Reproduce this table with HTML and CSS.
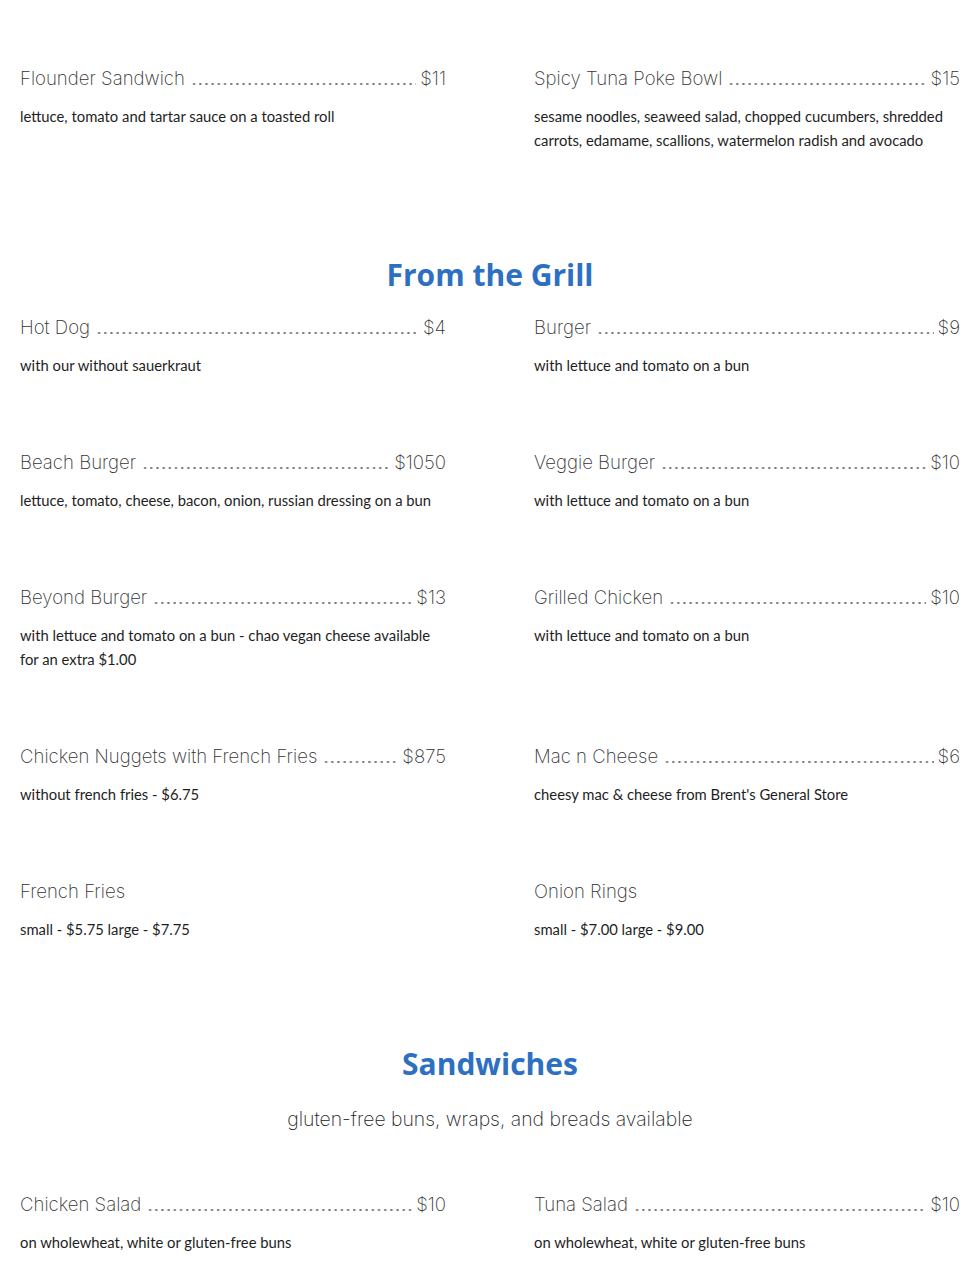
FILE: index.html
```html
<!DOCTYPE html>
<html lang="en">
<head>
<meta charset="utf-8">
<title>Menu</title>
<link rel="stylesheet" href="styles.css">
</head>
<body>
<main class="menu">
  <section class="section section-first">
    <div class="items">
      <div class="item">
        <div class="item-head"><span class="name">Flounder Sandwich</span><span class="leader"></span><span class="price">$11</span></div>
        <p class="desc">lettuce, tomato and tartar sauce on a toasted roll</p>
      </div>
      <div class="item">
        <div class="item-head"><span class="name">Spicy Tuna Poke Bowl</span><span class="leader"></span><span class="price">$15</span></div>
        <p class="desc">sesame noodles, seaweed salad, chopped cucumbers, shredded carrots, edamame, scallions, watermelon radish and avocado</p>
      </div>
    </div>
  </section>

  <section class="section">
    <h2 class="section-title">From the Grill</h2>
    <div class="items">
      <div class="item">
        <div class="item-head"><span class="name">Hot Dog</span><span class="leader"></span><span class="price">$4</span></div>
        <p class="desc">with our without sauerkraut</p>
      </div>
      <div class="item">
        <div class="item-head"><span class="name">Burger</span><span class="leader"></span><span class="price">$9</span></div>
        <p class="desc">with lettuce and tomato on a bun</p>
      </div>
      <div class="item">
        <div class="item-head"><span class="name">Beach Burger</span><span class="leader"></span><span class="price">$1050</span></div>
        <p class="desc">lettuce, tomato, cheese, bacon, onion, russian dressing on a bun</p>
      </div>
      <div class="item">
        <div class="item-head"><span class="name">Veggie Burger</span><span class="leader"></span><span class="price">$10</span></div>
        <p class="desc">with lettuce and tomato on a bun</p>
      </div>
      <div class="item">
        <div class="item-head"><span class="name">Beyond Burger</span><span class="leader"></span><span class="price">$13</span></div>
        <p class="desc">with lettuce and tomato on a bun - chao vegan cheese available for an extra $1.00</p>
      </div>
      <div class="item">
        <div class="item-head"><span class="name">Grilled Chicken</span><span class="leader"></span><span class="price">$10</span></div>
        <p class="desc">with lettuce and tomato on a bun</p>
      </div>
      <div class="item">
        <div class="item-head"><span class="name">Chicken Nuggets with French Fries</span><span class="leader"></span><span class="price">$875</span></div>
        <p class="desc">without french fries - $6.75</p>
      </div>
      <div class="item">
        <div class="item-head"><span class="name">Mac n Cheese</span><span class="leader"></span><span class="price">$6</span></div>
        <p class="desc">cheesy mac &amp; cheese from Brent's General Store</p>
      </div>
      <div class="item">
        <div class="item-head"><span class="name">French Fries</span></div>
        <p class="desc">small - $5.75 large - $7.75</p>
      </div>
      <div class="item">
        <div class="item-head"><span class="name">Onion Rings</span></div>
        <p class="desc">small - $7.00 large - $9.00</p>
      </div>
    </div>
  </section>

  <section class="section">
    <h2 class="section-title">Sandwiches</h2>
    <p class="section-sub">gluten-free buns, wraps, and breads available</p>
    <div class="items">
      <div class="item">
        <div class="item-head"><span class="name">Chicken Salad</span><span class="leader"></span><span class="price">$10</span></div>
        <p class="desc">on wholewheat, white or gluten-free buns</p>
      </div>
      <div class="item">
        <div class="item-head"><span class="name">Tuna Salad</span><span class="leader"></span><span class="price">$10</span></div>
        <p class="desc">on wholewheat, white or gluten-free buns</p>
      </div>
    </div>
  </section>
</main>
</body>
</html>
```

FILE: styles.css
```css
html, body {
  margin: 0;
  padding: 0;
  background: #ffffff;
}

body {
  overflow: hidden;
}

.menu {
  width: 940px;
  padding: 0 0 0 20px;
}

.section {
  display: flex;
  flex-direction: column;
}

.section-first {
  padding-top: 66px;
}

.section-title {
  margin: 103px 0 20px;
  text-align: center;
  font-family: "Open Sans", "Liberation Sans", sans-serif;
  font-weight: 700;
  font-size: 30px;
  line-height: 40px;
  height: 40px;
  color: #2d70c2;
}

.section-sub {
  margin: 0 0 58px;
  text-align: center;
  font-family: Inter, "Liberation Sans", sans-serif;
  font-weight: 200;
  font-size: 19.4px;
  line-height: 30px;
  color: #222;
}

.items {
  display: grid;
  grid-template-columns: 426px 426px;
  column-gap: 88px;
  row-gap: 73px;
}

.item {
  display: flex;
  flex-direction: column;
}

.item-head {
  display: flex;
  align-items: stretch;
  height: 24px;
  font-family: Inter, "Liberation Sans", sans-serif;
  font-weight: 200;
  font-size: 18.6px;
  line-height: 24px;
  color: #333;
}

.name {
  white-space: nowrap;
}

.leader {
  flex: 1;
  margin: 0 4px 0 6px;
  background-image: radial-gradient(circle, #7a7a7a 0.9px, transparent 1.3px);
  background-size: 6.2px 4px;
  background-repeat: repeat-x;
  background-position: 0 calc(100% - 4px);
}

.price {
  white-space: nowrap;
}

.desc {
  margin: 14px 0 0;
  font-family: Lato, "Liberation Sans", sans-serif;
  font-size: 14.8px;
  line-height: 24px;
  color: #1e1e1e;
}
```
